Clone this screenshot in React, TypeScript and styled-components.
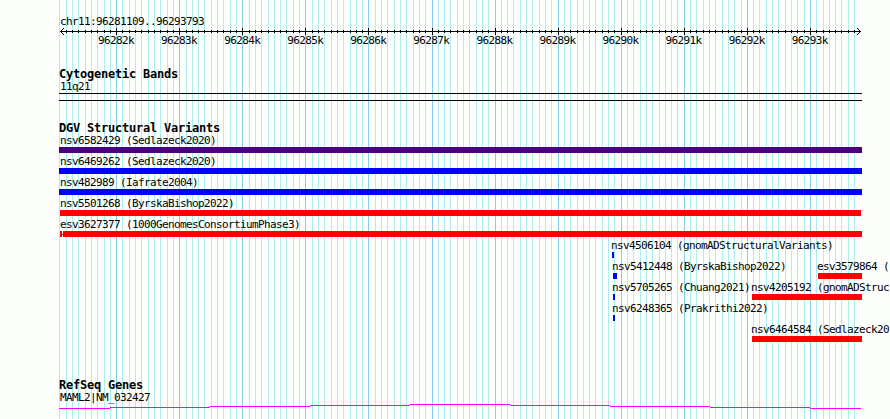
import styled, { createGlobalStyle } from "styled-components";

const GlobalStyle = createGlobalStyle`
  body {
    margin: 0;
    background: #fdfffc;
  }
`;

// plot area, in page pixels
const LEFT = 59;
const HEIGHT = 419;
const FIRST_MAJOR = 116.15;
const MINOR_STEP = 6.307;

const ticks = Array.from({ length: 127 }, (_, i) => ({
  x: Math.round(FIRST_MAJOR + (i - 9) * MINOR_STEP),
  major: i % 10 === 9,
}));

const rulerLabels = [
  "96282k", "96283k", "96284k", "96285k", "96286k", "96287k",
  "96288k", "96289k", "96290k", "96291k", "96292k", "96293k",
];

type Variant = {
  name: string;
  start: number;
  width: number;
  color: string;
  gap?: boolean;
};

const variantRows: Variant[][] = [
  [{ name: "nsv6582429 (Sedlazeck2020)", start: 59, width: 803, color: "#4b0082" }],
  [{ name: "nsv6469262 (Sedlazeck2020)", start: 59, width: 803, color: "#0000ff" }],
  [{ name: "nsv482989 (Iafrate2004)", start: 59, width: 803, color: "#0000ff" }],
  [{ name: "nsv5501268 (ByrskaBishop2022)", start: 60, width: 801, color: "#ff0000" }],
  [{ name: "esv3627377 (1000GenomesConsortiumPhase3)", start: 60, width: 802, color: "#ff0000", gap: true }],
  [{ name: "nsv4506104 (gnomADStructuralVariants)", start: 612, width: 2, color: "#0000ff" }],
  [
    { name: "nsv5412448 (ByrskaBishop2022)", start: 613, width: 4, color: "#0000ff" },
    { name: "esv3579864 (", start: 818, width: 44, color: "#ff0000" },
  ],
  [
    { name: "nsv5705265 (Chuang2021)", start: 613, width: 2, color: "#0000ff" },
    { name: "nsv4205192 (gnomADStruc", start: 752, width: 110, color: "#ff0000" },
  ],
  [{ name: "nsv6248365 (Prakrithi2022)", start: 613, width: 2, color: "#0000ff" }],
  [{ name: "nsv6464584 (Sedlazeck20", start: 752, width: 110, color: "#ff0000" }],
];

// labels sit one pixel inside full-width bars and one pixel before the short ones
const labelShift = (start: number) => {
  if (start === LEFT) return 1;
  return start > 600 ? -1 : 0;
};

const Browser = styled.main`
  position: relative;
  width: 890px;
  height: ${HEIGHT}px;
  overflow: hidden;
  color: #000;
  font-family: "DejaVu Sans Mono", monospace;
  font-size: 11px;
  letter-spacing: -0.622px;
  white-space: nowrap;
`;

const GridLines = styled.svg`
  position: absolute;
  inset: 0;
  z-index: -1;
`;

const Ruler = styled.header`
  height: 53px;
  padding-top: 15px;
  box-sizing: border-box;
`;

const Label = styled.div`
  height: 13px;
  padding-left: 1px;
  line-height: 13px;
`;

const Position = styled(Label)`
  margin-left: ${LEFT}px;
`;

const Axis = styled.svg`
  display: block;
`;

const RulerNumbers = styled.div`
  display: grid;
  grid-template-columns: repeat(12, 63.07px);
  margin: -1px 0 0 98px;
  line-height: 13px;
`;

const Track = styled.section<{ $top: number }>`
  margin-top: ${(p) => p.$top}px;
`;

const TrackTitle = styled.h2`
  height: 12px;
  margin: 0 0 0 ${LEFT}px;
  font-size: 12px;
  line-height: 13px;
  letter-spacing: -0.225px;
`;

const Band = styled.div`
  width: 803px;
  height: 6px;
  margin-left: ${LEFT}px;
  border: solid #000;
  border-width: 1px 0;
`;

const VariantRow = styled.div`
  display: flex;
  height: 21px;
`;

const Feature = styled.div<{ $offset: number; $width: number }>`
  flex: none;
  width: ${(p) => p.$width}px;
  margin-left: ${(p) => p.$offset}px;
`;

const FeatureLabel = styled(Label)<{ $shift: number }>`
  padding-left: 0;
  margin-left: ${(p) => p.$shift}px;
`;

const FeatureBar = styled.div<{ $color: string; $gap?: boolean }>`
  height: 6px;
  background: ${(p) =>
    p.$gap
      ? `linear-gradient(${p.$color}, ${p.$color}) 0 3px / 4px 1px no-repeat,
         linear-gradient(90deg, ${p.$color} 2px, #fdfffc 2px 3px, ${p.$color} 3px)`
      : p.$color};
`;

const Gene = styled.svg`
  display: block;
`;

export default function App() {
  return (
    <Browser>
      <GlobalStyle />
      <GridLines width="890" height={HEIGHT} shapeRendering="crispEdges">
        {ticks.filter((t) => t.x < 860).map((t) => (
          <rect key={t.x} x={t.x} width="1" height={HEIGHT} fill={t.major ? "#87ceeb" : "#afeeee"} />
        ))}
      </GridLines>

      <Ruler>
        <Position>chr11:96281109..96293793</Position>
        <Axis width="890" height="7" shapeRendering="crispEdges">
          <rect x="60" y="3" width="801" height="1" />
          {ticks.filter((t) => t.x > 60 && t.x < 860).map((t) => (
            <rect key={t.x} x={t.x} y={t.major ? 0 : 2} width="1" height={t.major ? 7 : 3} />
          ))}
          <path d="M61 2h1v1h-1zM62 1h1v1h-1zM63 0h1v1h-1zM61 4h1v1h-1zM62 5h1v1h-1zM63 6h1v1h-1z" />
          <path d="M859 2h1v1h-1zM858 1h1v1h-1zM857 0h1v1h-1zM859 4h1v1h-1zM858 5h1v1h-1zM857 6h1v1h-1z" />
        </Axis>
        <RulerNumbers>
          {rulerLabels.map((label) => (
            <span key={label}>{label}</span>
          ))}
        </RulerNumbers>
      </Ruler>

      <Track $top={15}>
        <TrackTitle>Cytogenetic Bands</TrackTitle>
        <Position>11q21</Position>
        <Band />
      </Track>

      <Track $top={21}>
        <TrackTitle>DGV Structural Variants</TrackTitle>
        {variantRows.map((row) => (
          <VariantRow key={row[0].name}>
            {row.map((v, i) => {
              const prev = row[i - 1];
              const end = prev ? prev.start + prev.width : 0;
              return (
                <Feature key={v.name} $offset={v.start - end} $width={v.width}>
                  <FeatureLabel $shift={labelShift(v.start)}>{v.name}</FeatureLabel>
                  <FeatureBar $color={v.color} $gap={v.gap} />
                </Feature>
              );
            })}
          </VariantRow>
        ))}
      </Track>

      <Track $top={35}>
        <TrackTitle>RefSeq Genes</TrackTitle>
        <Position>MAML2|NM_032427</Position>
        <Gene width="890" height="15" shapeRendering="crispEdges" fill="#ff00ff">
          <rect x="59" y="4" width="51" height="1" />
          <rect x="110" y="3" width="100" height="1" />
          <rect x="210" y="2" width="100" height="1" />
          <rect x="310" y="1" width="100" height="1" />
          <rect x="410" y="0" width="100" height="1" />
          <rect x="510" y="1" width="100" height="1" />
          <rect x="610" y="2" width="100" height="1" />
          <rect x="710" y="3" width="100" height="1" />
          <rect x="810" y="4" width="51" height="1" />
        </Gene>
      </Track>
    </Browser>
  );
}
